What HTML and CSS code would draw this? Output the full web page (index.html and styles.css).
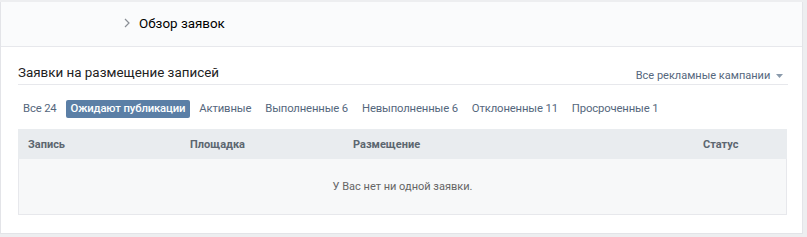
FILE: index.html
```html
<!DOCTYPE html>
<html lang="ru">
<head>
<meta charset="utf-8">
<link rel="stylesheet" href="styles.css">
</head>
<body>
<div class="card">
  <div class="crumbs">
    <svg class="chev" width="6" height="10" viewBox="0 0 6 10"><path d="M1 1l4 4-4 4" fill="none" stroke="#8a8f96" stroke-width="1.2"/></svg>
    <span class="crumb">Обзор заявок</span>
  </div>
  <div class="section">
    <div class="title-row">
      <span class="title">Заявки на размещение записей</span>
      <span class="filter">Все рекламные кампании <svg width="7" height="4" viewBox="0 0 7 4"><path d="M0 0h7L3.5 4z" fill="#8a9aab"/></svg></span>
    </div>
    <div class="tabs">
      <span class="tab">Все 24</span>
      <span class="tab active">Ожидают публикации</span>
      <span class="tab">Активные</span>
      <span class="tab">Выполненные 6</span>
      <span class="tab">Невыполненные 6</span>
      <span class="tab">Отклоненные 11</span>
      <span class="tab">Просроченные 1</span>
    </div>
    <div class="table">
      <div class="thead">
        <span class="c1">Запись</span>
        <span class="c2">Площадка</span>
        <span class="c3">Размещение</span>
        <span class="c4">Статус</span>
      </div>
      <div class="empty">У Вас нет ни одной заявки.</div>
    </div>
  </div>
</div>
</body>
</html>
```
FILE: styles.css
```css
html, body { margin: 0; padding: 0; }
body {
  background: #edeef0;
  font-family: Roboto, "Open Sans", "Liberation Sans", sans-serif;
  width: 807px;
  height: 237px;
  overflow: hidden;
  padding-top: 2px;
  box-sizing: border-box;
}
.card {
  width: 803px;
  height: 232px;
  box-sizing: border-box;
  background: #fff;
  border: 1px solid #e3e4e8;
  border-top: 0;
}
.crumbs {
  height: 45px;
  box-sizing: border-box;
  background: #fafbfc;
  border-bottom: 1px solid #e7e8ec;
  display: flex;
  align-items: center;
  padding-left: 123px;
  padding-bottom: 2px;
}
.chev { margin-right: 9px; }
.crumb { font-size: 13.4px; color: #000; }
.section { padding: 0 14px 0 17px; }
.title-row {
  display: flex;
  justify-content: space-between;
  align-items: flex-end;
  height: 38px;
  box-sizing: border-box;
  border-bottom: 1px solid #e7e8ec;
  padding-bottom: 3px;
}
.title { font-size: 13.4px; color: #222; padding-bottom: 1px; }
.filter {
  font-size: 11px;
  color: #55677d;
  padding-right: 5px;
  margin-bottom: -1px;
}
.filter svg { margin-left: 3px; vertical-align: middle; }
.tabs {
  display: flex;
  gap: 4px;
  margin-top: 15px;
  height: 18px;
}
.tab {
  font-size: 11.3px;
  letter-spacing: -0.15px;
  color: #55677d;
  padding: 0 5px;
  line-height: 18px;
  border-radius: 2px;
}
.tab.active {
  background: #5b7fa6;
  color: #fff;
  font-weight: 500;
}
.table {
  margin-top: 11px;
  width: 769px;
}
.thead {
  height: 30px;
  background: #e9ecef;
  display: flex;
  align-items: center;
  font-size: 11px;
  font-weight: 700;
  color: #5c6670;
  position: relative;
}
.thead span { position: absolute; }
.c1 { left: 10px; }
.c2 { left: 172px; }
.c3 { left: 335px; }
.c4 { left: 685px; }
.empty {
  height: 56px;
  box-sizing: border-box;
  background: #f7f8f9;
  border: 1px solid #e7e8ec;
  border-top: 0;
  display: flex;
  align-items: center;
  justify-content: center;
  font-size: 11px;
  color: #656565;
  padding-bottom: 1px;
}
```
